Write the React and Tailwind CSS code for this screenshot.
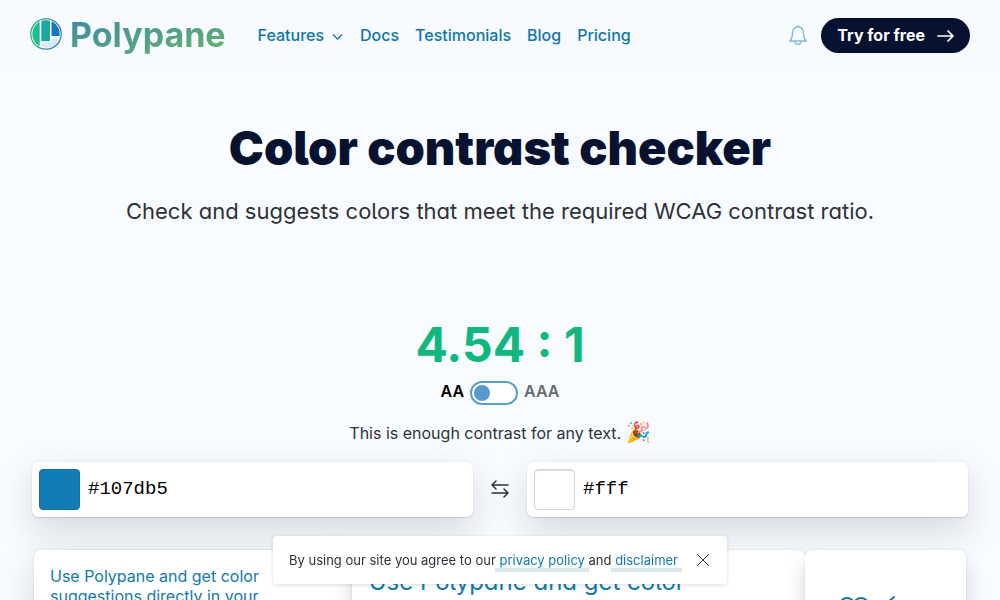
import React, { useState } from "react";

const navLinks = ["Docs", "Testimonials", "Blog", "Pricing"];

function Logo() {
  return (
    <svg viewBox="0 0 32 32" className="mb-0.5 size-8" aria-hidden="true">
      <defs>
        <linearGradient id="ring" x1="0" x2="1">
          <stop offset="0" stopColor="#2fae8c" />
          <stop offset="1" stopColor="#3a78b4" />
        </linearGradient>
        <linearGradient id="leaf" x1="0" x2="1">
          <stop offset="0" stopColor="#12cc7c" />
          <stop offset="1" stopColor="#1dbb93" />
        </linearGradient>
        <clipPath id="disc">
          <circle cx="16" cy="16" r="13.7" />
        </clipPath>
      </defs>
      <circle cx="16" cy="16" r="15.2" fill="#fff" stroke="url(#ring)" strokeWidth="1.3" />
      <g clipPath="url(#disc)">
        <rect x="0" y="0" width="9.7" height="32" fill="url(#leaf)" />
        <rect x="11.3" y="0" width="8.7" height="23.2" fill="#1fa6a4" />
        <rect x="11.3" y="24.3" width="20" height="8" fill="#d9ebef" />
        <rect x="21.3" y="19.5" width="10" height="13" fill="#d9ebef" />
        <rect x="21.5" y="0" width="10" height="18" fill="#1675bd" />
      </g>
    </svg>
  );
}

function ColorField({ label, value, swatch, onChange }) {
  return (
    <div className="flex h-[55px] min-w-0 flex-1 items-center gap-2 rounded-md bg-white px-[7px] shadow-[0_0_2px_rgba(0,0,0,0.08),0_1px_1px_rgba(0,0,0,0.12),0_14px_36px_rgba(20,30,40,0.15)]">
      <span className={`size-[41px] shrink-0 rounded border ${swatch}`} />
      <input
        aria-label={label}
        value={value}
        onChange={(e) => onChange(e.target.value)}
        className="min-w-0 flex-1 bg-transparent font-['Liberation_Mono',monospace] text-[19px] text-black outline-none"
      />
    </div>
  );
}

function NoticeLink({ href, children }) {
  return (
    <a href={href} className="-mx-1 border-b-4 border-[#d9e9ef] px-1 text-[#107aad]">
      {children}
    </a>
  );
}

export default function App() {
  const [fg, setFg] = useState("#107db5");
  const [bg, setBg] = useState("#fff");
  const [aaa, setAaa] = useState(false);
  const [notice, setNotice] = useState(true);
  const swap = () => {
    setFg(bg);
    setBg(fg);
  };
  return (
    <div className="h-screen overflow-hidden bg-[#f8fbff] font-['Inter','Noto_Sans',sans-serif] text-[#2e3238]">
      <header className="flex h-[70px] items-center bg-[#f7faff] px-[30px]">
        <a href="#home" className="flex items-center gap-2">
          <Logo />
          <span className="bg-gradient-to-br from-[#3f86a8] to-[#67b562] bg-clip-text text-[34px] leading-10 font-bold text-transparent">
            Polypane
          </span>
        </a>
        <nav className="ml-8 flex items-center gap-4 font-medium text-[#0f76a8]">
          <button type="button" className="flex items-center gap-2">
            Features
            <svg viewBox="0 0 12 12" className="mt-1 size-3" fill="none" stroke="currentColor" strokeWidth="1.3" aria-hidden="true">
              <path d="M1 3.500 5.500 8l4.500-4.500" />
            </svg>
          </button>
          {navLinks.map((name) => (
            <a key={name} href={`#${name.toLowerCase()}`}>{name}</a>
          ))}
        </nav>
        <button type="button" aria-label="Notifications" className="mr-3 ml-auto text-[#84bbd3]">
          <svg viewBox="0 0 22 22" className="size-[22px]" fill="none" stroke="currentColor" strokeWidth="1.4" strokeLinejoin="round" aria-hidden="true">
            <path d="M2.500 17h17c-2.200-1.300-2.700-3.500-2.900-7.200C16.400 5.800 14.500 2.800 11 2.800S5.600 5.800 5.400 9.800C5.200 13.500 4.700 15.700 2.500 17ZM8 17c0 2.200 1.200 3.300 3 3.300s3-1.100 3-3.300M11 1.200v1.600" />
          </svg>
        </button>
        <a href="#trial" className="flex h-[35px] items-center gap-3 rounded-full bg-[#071230] px-4 font-bold text-white">
          Try for free
          <svg viewBox="0 0 17 17" className="size-[17px]" fill="none" stroke="currentColor" strokeWidth="1.7" strokeLinecap="round" strokeLinejoin="round" aria-hidden="true">
            <path d="M1 9h15M11 4l5 5-5 5" />
          </svg>
        </a>
      </header>

      <main>
        <div className="pt-12 text-center">
          <h1 className="text-[47px] leading-[60px] font-black text-[#071230] [font-feature-settings:'cv05','cv11']">
            Color contrast checker
          </h1>
          <p className="mt-4 text-[22px] leading-[34px] [font-feature-settings:'cv05','cv11']">
            Check and suggests colors that meet the required WCAG contrast ratio.
          </p>
        </div>

        <section className="mt-[82px] text-center">
          <p className="text-5xl leading-[69px] font-bold text-[#10b77f]">4.54 : 1</p>
          <label className="flex items-center justify-center gap-[6px] font-semibold">
            <span className="pb-1 text-black">AA</span>
            <input type="checkbox" role="switch" checked={aaa} onChange={(e) => setAaa(e.target.checked)} className="peer sr-only" />
            <span className="flex h-6 w-12 items-center rounded-full border-2 border-[#5a9fc0] bg-white px-0.5 peer-checked:justify-end">
              <span className="size-4 rounded-full bg-[#559bcd]" />
            </span>
            <span className="pb-1 text-[#666a70]">AAA</span>
          </label>
          <p className="mt-[14px] leading-6">
            This is enough contrast for any text. <span className="text-xl leading-none">🎉</span>
          </p>
        </section>

        <form className="mt-[17px] flex items-center px-8">
          <ColorField label="Text color" value={fg} swatch="border-[#176f9d] bg-[#107db5]" onChange={setFg} />
          <button type="button" aria-label="Swap colors" onClick={swap} className="mx-[17px] text-[#2e3238]">
            <svg viewBox="0 0 20 20" className="size-5" fill="none" stroke="currentColor" strokeWidth="1.5" strokeLinecap="round" strokeLinejoin="round" aria-hidden="true">
              <path d="M18 5H2M6 1 2 5l4 4M2 13h16M14 9l4 4-4 4" />
            </svg>
          </button>
          <ColorField label="Background color" value={bg} swatch="border-[#d4d4d4] bg-white shadow-[inset_0_1px_1px_rgba(0,0,0,0.15)]" onChange={setBg} />
        </form>

        <div className="mt-[33px] grid grid-cols-[318fr_454fr_161fr] px-[34px] text-[#107aad]">
          <a href="#suggest" className="h-80 rounded-md bg-white p-4 leading-5 shadow-[0_0_2px_rgba(0,0,0,0.16),0_14px_36px_rgba(20,30,40,0.15)]">
            <span className="block max-w-56">Use Polypane and get color suggestions directly in your</span>
          </a>
          <a href="#editor" className="h-80 rounded-md bg-white px-[17px] py-4 text-2xl leading-8 shadow-[0_0_2px_rgba(0,0,0,0.16),0_14px_20px_rgba(20,30,40,0.16)] [font-feature-settings:'cv05','cv11']">
            Use Polypane and get color
          </a>
          <a href="#preview" aria-label="Preview" className="h-80 rounded-md bg-white px-8 pt-11 shadow-[0_0_2px_rgba(0,0,0,0.16),0_14px_20px_rgba(20,30,40,0.16)]">
            <svg viewBox="0 0 64 40" className="h-10 w-16" fill="none" stroke="currentColor" strokeWidth="2" strokeLinecap="round" aria-hidden="true">
              <circle cx="10" cy="11" r="7" />
              <circle cx="24" cy="11" r="7" />
              <path d="M57 3 51 8v12" />
            </svg>
          </a>
        </div>
      </main>

      {notice && (
        <div role="status" className="fixed bottom-4 left-1/2 flex h-12 -translate-x-1/2 items-center gap-[19px] rounded bg-white pr-[18px] pl-4 text-[13px] whitespace-nowrap shadow-[0_1px_4px_rgba(0,0,0,0.14)]">
          <p className="pt-0.5">
            By using our site you agree to our <NoticeLink href="#privacy">privacy policy</NoticeLink> and{" "}
            <NoticeLink href="#disclaimer">disclaimer</NoticeLink>
          </p>
          <button type="button" aria-label="Close" onClick={() => setNotice(false)}>
            <svg viewBox="0 0 12 12" className="size-3" fill="none" stroke="#2e3238" aria-hidden="true">
              <path d="m0 0 12 12M12 0 0 12" />
            </svg>
          </button>
        </div>
      )}
    </div>
  );
}
